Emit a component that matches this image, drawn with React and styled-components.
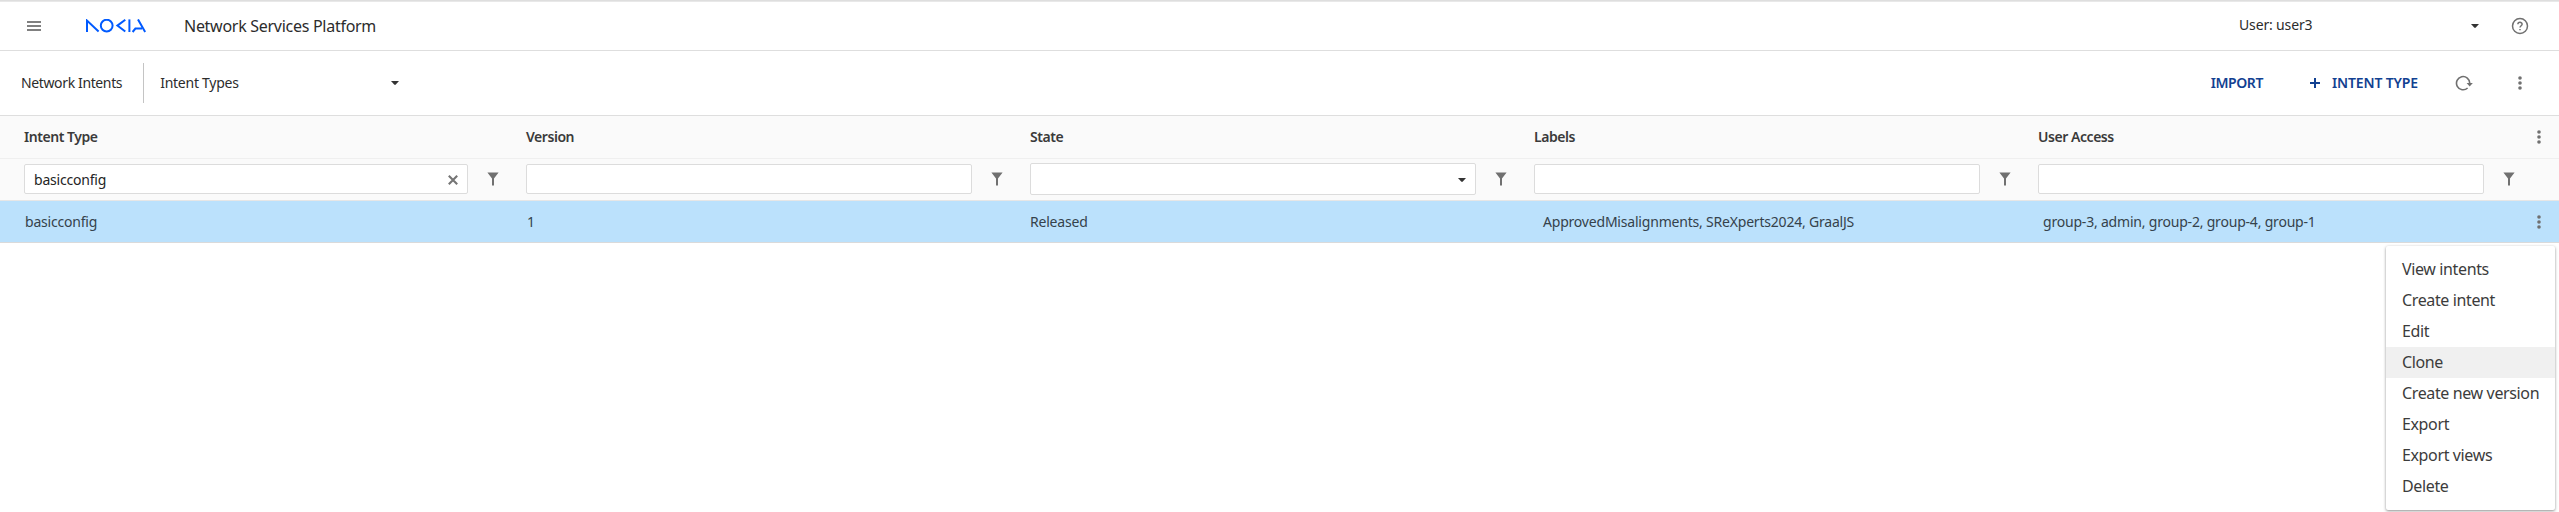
import React from 'react';
import styled, { createGlobalStyle } from 'styled-components';

const GlobalStyle = createGlobalStyle`
  * { box-sizing: border-box; }
  body {
    margin: 0;
    background: #fff;
    color: #2c2c2c;
    font: 400 14px/20px "Noto Sans", "Open Sans", sans-serif;
    letter-spacing: -0.2px;
    overflow: hidden;
  }
  svg { display: block; flex: none; }
`;

const Page = styled.div`
  position: relative;
  height: 512px;
  overflow: hidden;
`;

const TopBar = styled.header`
  display: flex;
  align-items: center;
  height: 51px;
  padding: 1px 30px 0 26px;
  border-top: 1px solid #dedede;
  border-bottom: 1px solid #dedede;
  box-shadow: inset 0 1px 0 #e8e8e8;
`;

const Logo = styled.svg`
  margin-left: 44px;
`;

const ProductName = styled.h1`
  margin: 0 auto 0 38px;
  font-size: 16px;
  font-weight: 400;
  letter-spacing: -0.28px;
`;

const Picker = styled.div`
  display: flex;
  align-items: center;
  justify-content: space-between;
  width: ${(p) => p.$width}px;
  letter-spacing: ${(p) => p.$spacing || '-0.15px'};
`;

const UserPicker = styled(Picker)`
  margin-right: 32px;
  span { padding-bottom: 2px; }
`;

const Toolbar = styled.nav`
  display: flex;
  align-items: center;
  height: 65px;
  padding: 0 30px 0 21px;
  border-bottom: 1px solid #dedede;
`;

const Section = styled.span`
  padding: 0 21px 1px 0;
  letter-spacing: -0.37px;
`;

const ViewPicker = styled(Picker)`
  height: 40px;
  margin-right: auto;
  padding-left: 16px;
  border-left: 1px solid #c4c4c4;
  span { padding-bottom: 1px; }
`;

const ActionButton = styled.button`
  display: flex;
  align-items: center;
  gap: 12px;
  margin: 0 ${(p) => p.$after}px 0 0;
  padding: 0;
  border: 0;
  background: none;
  color: #124191;
  font: inherit;
  font-weight: 600;
  letter-spacing: ${(p) => p.$spacing}px;
  span { padding-bottom: 1px; }
`;

const IconButton = styled.button`
  display: flex;
  margin: 0 ${(p) => p.$after || 0}px 0 0;
  padding: 0;
  border: 0;
  background: none;
`;

const columns = '514px repeat(3, 504px) 1fr';

const HeaderRow = styled.div`
  display: grid;
  grid-template-columns: ${columns};
  align-items: center;
  height: 43px;
  background: #fafafa;
  border-bottom: 1px solid #efefef;
`;

const HeaderCell = styled.div`
  display: flex;
  align-items: center;
  justify-content: space-between;
  padding: 0 18px 0 ${(p) => (p.$first ? 24 : 12)}px;
  color: #3a3a3a;
  font-weight: 600;
  letter-spacing: -0.45px;
`;

const FilterRow = styled.div`
  display: grid;
  grid-template-columns: ${columns};
  align-items: center;
  height: 42px;
  padding-bottom: 1px;
  background: #fafafa;
  border-bottom: 1px solid #e6e6e6;
`;

const FilterCell = styled.div`
  display: flex;
  align-items: center;
  gap: 19px;
  padding-left: ${(p) => (p.$first ? 24 : 12)}px;
  padding-right: ${(p) => (p.$last ? 44 : 15)}px;
`;

const FilterField = styled.div`
  flex: 1;
  display: flex;
  align-items: center;
  justify-content: space-between;
  height: ${(p) => (p.$select ? 32 : 30)}px;
  padding: 1px 9px 0;
  background: #fff;
  border: 1px solid #dcdcdc;
  border-radius: 2px;
  color: #242424;
`;

const DataRow = styled.div`
  display: grid;
  grid-template-columns: ${columns};
  align-items: center;
  height: 42px;
  background: #bbe1fc;
  border-bottom: 1px solid #dadada;
  color: #35424b;
`;

const DataCell = styled.div`
  display: flex;
  align-items: center;
  justify-content: space-between;
  padding: 0 18px 0 ${(p) => p.$inset}px;
`;

const Menu = styled.ul`
  position: absolute;
  top: 246px;
  right: 4px;
  width: 169px;
  margin: 0;
  padding: 8px 0;
  list-style: none;
  background: #fff;
  border-radius: 2px;
  box-shadow: 0 1px 3px rgba(0, 0, 0, 0.45);
`;

const MenuItem = styled.li`
  height: 31px;
  padding-left: 16px;
  background: ${(p) => (p.$active ? '#f0f0f0' : 'transparent')};
  color: #3c3c3c;
  font-size: 16px;
  line-height: 31px;
  letter-spacing: -0.37px;
  white-space: nowrap;
`;

const HamburgerIcon = () => (
  <svg width="16" height="12" viewBox="0 0 16 12" fill="#808080">
    <path d="M1 1h14v2H1zM1 5h14v2H1zM1 9h14v2H1z" />
  </svg>
);

const NokiaLogo = () => (
  <Logo width="60" height="14" viewBox="86 19 60 14" fill="none" stroke="#005aff" strokeWidth="2">
    <path d="M87 32V20.6L98.6 31.4" />
    <circle cx="106.7" cy="25.6" r="5.9" />
    <path d="M125.3 19.8L117.4 25.6L125.3 31.5" />
    <path d="M129.4 19.4V32" />
    <path d="M132.6 32L135.4 28.6H142M138 19.4L145.2 32" />
  </Logo>
);

const Caret = () => (
  <svg width="8" height="4" viewBox="0 0 8 4" fill="#333">
    <path d="M0 0h8L4.6 3.8H3.4z" />
  </svg>
);

const HelpIcon = () => (
  <svg width="18" height="18" viewBox="0 0 18 18" fill="none" stroke="#707070">
    <circle cx="9" cy="9" r="7.5" strokeWidth="1.5" />
    <path d="M6.9 7.3C6.9 4.7 11.1 4.7 11.1 7.2C11.1 8.7 9 8.8 9 10.6M9 11.9V13.3" strokeWidth="1.5" />
  </svg>
);

const RefreshIcon = () => (
  <svg width="18" height="16" viewBox="0 0 18 16" fill="none" stroke="#707070" strokeWidth="1.6">
    <path d="M14.7 8.4A6.6 6.6 0 1 0 12.6 13" />
    <path d="M11.6 8h6.2l-3.1 3.4z" fill="#707070" stroke="none" />
  </svg>
);

const PlusIcon = () => (
  <svg width="10" height="10" viewBox="0 0 10 10" fill="#124191">
    <path d="M4 0h2v4h4v2H6v4H4V6H0V4h4z" />
  </svg>
);

const MoreIcon = () => (
  <svg width="4" height="14" viewBox="0 0 4 14" fill="#707070">
    <circle cx="2" cy="2" r="1.8" />
    <circle cx="2" cy="7" r="1.8" />
    <circle cx="2" cy="12" r="1.8" />
  </svg>
);

const FunnelIcon = () => (
  <svg width="12" height="14" viewBox="0 0 12 14" fill="#707070">
    <path d="M0.4 0.5h11.2L7 6.5V13.5H5V6.5z" />
  </svg>
);

const ClearIcon = () => (
  <svg width="10" height="10" viewBox="0 0 10 10" stroke="#757575" strokeWidth="2.1">
    <path d="M0.8 0.8l8.4 8.4M9.2 0.8L0.8 9.2" />
  </svg>
);

const fields = [
  { title: 'Intent Type', filter: 'basicconfig', value: 'basicconfig', inset: 25 },
  { title: 'Version', value: '1', inset: 13 },
  { title: 'State', select: true, value: 'Released', inset: 12 },
  { title: 'Labels', value: 'ApprovedMisalignments, SReXperts2024, GraalJS', inset: 21 },
  { title: 'User Access', value: 'group-3, admin, group-2, group-4, group-1', inset: 17 },
];
const last = fields.length - 1;

const actions = [
  'View intents', 'Create intent', 'Edit', 'Clone',
  'Create new version', 'Export', 'Export views', 'Delete',
];

export default function App() {
  return (
    <Page>
      <GlobalStyle />
      <TopBar>
        <IconButton><HamburgerIcon /></IconButton>
        <NokiaLogo />
        <ProductName>Network Services Platform</ProductName>
        <UserPicker $width={240}><span>User: user3</span><Caret /></UserPicker>
        <IconButton><HelpIcon /></IconButton>
      </TopBar>
      <Toolbar>
        <Section>Network Intents</Section>
        <ViewPicker $width={256} $spacing="-0.25px"><span>Intent Types</span><Caret /></ViewPicker>
        <ActionButton $after={47} $spacing={-0.4}><span>IMPORT</span></ActionButton>
        <ActionButton $after={37} $spacing={-0.15}><PlusIcon /><span>INTENT TYPE</span></ActionButton>
        <IconButton $after={45}><RefreshIcon /></IconButton>
        <IconButton $after={7}><MoreIcon /></IconButton>
      </Toolbar>
      <HeaderRow>
        {fields.map((f, i) => (
          <HeaderCell key={f.title} $first={i === 0}>
            {f.title}
            {i === last && <MoreIcon />}
          </HeaderCell>
        ))}
      </HeaderRow>
      <FilterRow>
        {fields.map((f, i) => (
          <FilterCell key={f.title} $first={i === 0} $last={i === last}>
            <FilterField $select={f.select}>
              <span>{f.filter}</span>
              {f.filter && <ClearIcon />}
              {f.select && <Caret />}
            </FilterField>
            <FunnelIcon />
          </FilterCell>
        ))}
      </FilterRow>
      <DataRow>
        {fields.map((f, i) => (
          <DataCell key={f.title} $inset={f.inset}>
            {f.value}
            {i === last && <MoreIcon />}
          </DataCell>
        ))}
      </DataRow>
      <Menu>
        {actions.map((a) => (
          <MenuItem key={a} $active={a === 'Clone'}>{a}</MenuItem>
        ))}
      </Menu>
    </Page>
  );
}
